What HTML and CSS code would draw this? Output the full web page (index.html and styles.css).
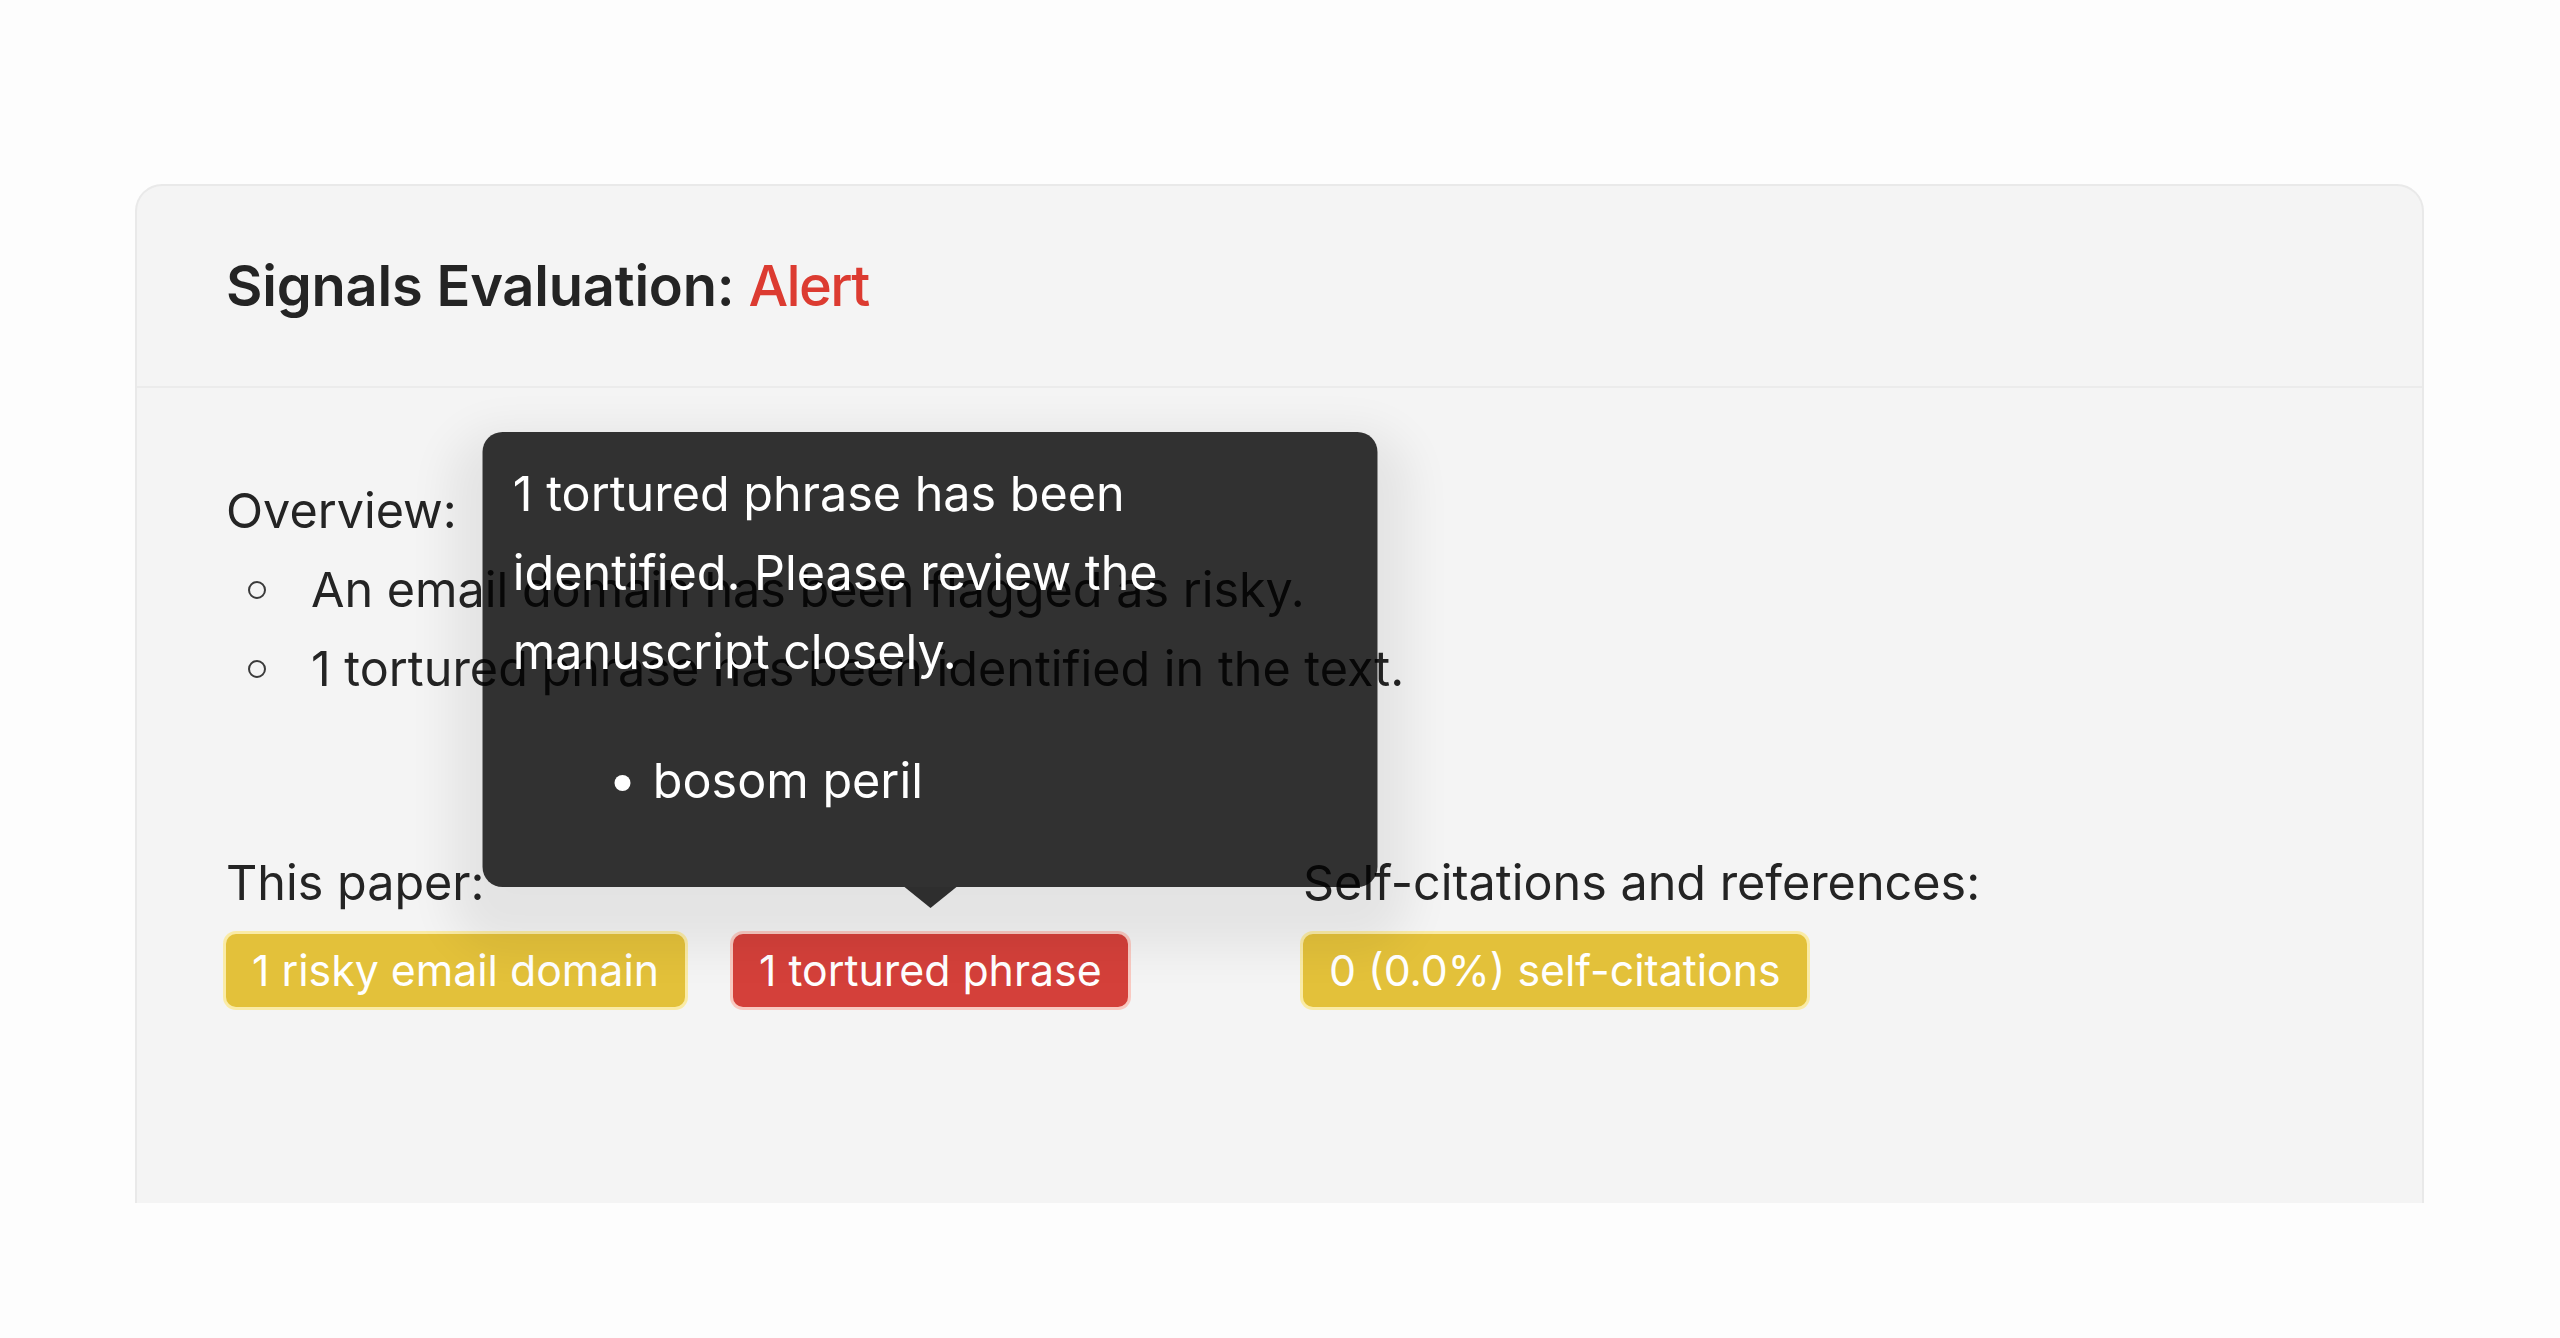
FILE: index.html
```html
<!DOCTYPE html>
<html lang="en">
<head>
  <meta charset="UTF-8" />
  <title>Signals Evaluation</title>
  <link rel="stylesheet" href="styles.css">
</head>
<body>
  <div class="page">
    <div class="card">
      <div class="card-header">
        <h2 class="card-title">Signals Evaluation: <span class="status-alert">Alert</span></h2>
      </div>

      <div class="card-body">
        <div class="overview">
          <p class="overview-label">Overview:</p>
          <ul class="overview-list">
            <li>An email domain has been flagged as risky.</li>
            <li>1 tortured phrase has been identified in the text.</li>
          </ul>
        </div>

        <div class="signals">
          <div class="signal-group">
            <p class="signal-label">This paper:</p>
            <div class="badges">
              <span class="badge badge-warning">1 risky email domain</span>
              <span class="badge-wrap">
                <span class="badge badge-danger">1 tortured phrase</span>
                <!-- tooltip shown on hover -->
                <span class="tooltip">
                  <span class="tooltip-text">1 tortured phrase has been identified. Please review the manuscript closely.</span>
                  <ul class="tooltip-list">
                    <li>bosom peril</li>
                  </ul>
                </span>
              </span>
            </div>
          </div>

          <div class="signal-group">
            <p class="signal-label">Self-citations and references:</p>
            <div class="badges">
              <span class="badge badge-warning">0 (0.0%) self-citations</span>
            </div>
          </div>
        </div>
      </div>
    </div>
  </div>
</body>
</html>
```

FILE: styles.css
```css
/* BODY & GLOBAL STYLES */
body {
  font-family: Inter, 'Noto Sans', Arial, sans-serif;
  margin: 0;
  padding: 0;
  background-color: #fdfdfd;
  color: #242424;
}

.page {
  padding: 184px 136px 0 135px;
  height: 1154px;
  overflow: hidden;
}

/* CARD */
.card {
  background-color: #f4f4f4;
  border: 2px solid #e9e9e9;
  border-bottom: none;
  border-radius: 27px 27px 0 0;
  height: 1017px;
}

.card-header {
  padding: 66px 89px;
  border-bottom: 2px solid #ebebeb;
}

.card-title {
  margin: 0;
  font-size: 56px;
  line-height: 68px;
  font-weight: 600;
  letter-spacing: -0.2px;
  color: #242424;
}

.status-alert {
  color: #dc3b31;
  font-weight: 500;
  letter-spacing: -1.6px;
}

.card-body {
  padding: 83px 89px 0 89px;
  font-size: 48.5px;
  line-height: 79px;
}

/* OVERVIEW */
.overview-label {
  margin: 0;
}

.overview-list {
  margin: 0;
  padding-left: 85px;
  list-style: none;
}

.overview-list li::before {
  content: "";
  display: inline-block;
  width: 14px;
  height: 14px;
  border: 2px solid #3a3a3a;
  border-radius: 50%;
  margin-left: -63px;
  margin-right: 45px;
  vertical-align: 8px;
}

/* SIGNAL GROUPS */
.signals {
  margin-top: 135px;
  display: grid;
  grid-template-columns: 1029px 1fr;
  gap: 48px;
}

.signal-label {
  margin: 0;
}

.badges {
  margin-top: 12px;
  display: flex;
  gap: 48px;
  align-items: flex-start;
}

.badge {
  display: block;
  height: 73px;
  line-height: 73px;
  padding: 0 26px;
  font-size: 42.8px;
  color: #fff;
  border-radius: 10px;
  white-space: nowrap;
}

.badge-warning {
  background-color: #e3c13a;
  box-shadow: 0 0 0 3px rgba(252, 232, 140, 0.75);
}

.badge-danger {
  background-color: #d4403a;
  box-shadow: 0 0 0 3px rgba(250, 190, 180, 0.8);
}

/* TOOLTIP */
.badge-wrap {
  position: relative;
  display: flex;
}

.tooltip {
  position: absolute;
  left: 50%;
  bottom: calc(100% + 47px);
  transform: translateX(-50%);
  width: 895px;
  box-sizing: border-box;
  padding: 22px 30px 20px;
  background-color: rgba(0, 0, 0, 0.8);
  color: #fff;
  border-radius: 20px;
  font-size: 48.5px;
  line-height: 79px;
  box-shadow: 0 30px 45px 32px rgba(0, 0, 0, 0.065);
}

.tooltip::after {
  content: "";
  position: absolute;
  left: 50%;
  top: 100%;
  margin-left: -26px;
  border-left: 26px solid transparent;
  border-right: 26px solid transparent;
  border-top: 21px solid rgba(0, 0, 0, 0.8);
}

.tooltip-text {
  display: block;
}

.tooltip-list {
  margin: 50px 0 47px;
  padding-left: 140px;
  list-style: disc;
}
```
